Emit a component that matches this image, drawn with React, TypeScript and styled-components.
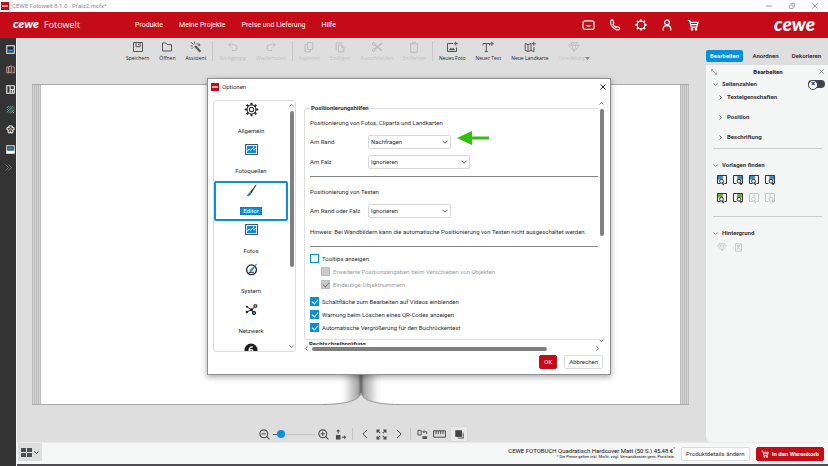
import React from 'react';
import styled, { createGlobalStyle, css } from 'styled-components';

const RED = '#c50b17';
const BLUE = '#0a8fdc';

const GlobalStyle = createGlobalStyle`
  * { box-sizing: border-box; }
  html, body, #root { height: 100%; margin: 0; }
  body {
    font-family: Roboto, 'Open Sans', 'Noto Sans', sans-serif;
    font-size: 6px;
    line-height: 8px;
    color: #2b2b2b;
    background: #fff;
    overflow: hidden;
  }
  button, input, select { font: inherit; color: inherit; margin: 0; padding: 0; }
  button { background: none; border: 0; cursor: pointer; white-space: nowrap; }
  svg { display: block; flex: none; }
  a { color: inherit; text-decoration: none; }
`;

/* ---------- icons ---------- */

type IconProps = { size?: number; width?: number; stroke?: number; children: React.ReactNode; box?: string };

const Icon = ({ size = 12, width, stroke = 1, box, children }: IconProps) => (
  <svg
    width={width ?? size}
    height={size}
    viewBox={box ?? '0 0 12 12'}
    fill="none"
    stroke="currentColor"
    strokeWidth={stroke}
    aria-hidden="true"
  >
    {children}
  </svg>
);

const Chevron = ({ dir, size = 6, stroke = 1 }: { dir: 'up' | 'down' | 'left' | 'right'; size?: number; stroke?: number }) => {
  const d = {
    up: 'M1 8.5 6 3.5l5 5',
    down: 'M1 3.5l5 5 5-5',
    left: 'M8.5 1l-5 5 5 5',
    right: 'M3.5 1l5 5-5 5',
  }[dir];
  return (
    <Icon size={size} stroke={(stroke * 12) / size}>
      <path d={d} />
    </Icon>
  );
};

const CloseIcon = ({ size = 6, stroke = 1 }: { size?: number; stroke?: number }) => (
  <Icon size={size} stroke={(stroke * 12) / size}>
    <path d="M1 1l10 10M11 1L1 11" />
  </Icon>
);

const SaveIcon = () => (
  <Icon>
    <path d="M1.5 1.5h9v9h-9zM4 1.5v4.2h4.2V1.5M6.6 2.6v1.6" />
  </Icon>
);
const FolderIcon = () => (
  <Icon>
    <path d="M1.5 2h3.3l1.4 1.6h4.3v6.4h-9z" />
  </Icon>
);
const WandIcon = () => (
  <Icon>
    <path d="M5 5l5.5 5.8" strokeWidth="2.2" />
    <path d="M3.4 3.6L1 1.2M4.6 2.6V.6M2.6 5H.6M6.3 3.4l1.4-1.5M3 6.4L1.8 7.8M9 2.6v2.6M7.7 3.9h2.6" />
  </Icon>
);
const UndoIcon = () => (
  <Icon>
    <path d="M4.2 1.2L1.6 3.8l2.6 2.6M1.8 3.8h5.4a2.9 2.9 0 010 5.8H5" />
  </Icon>
);
const RedoIcon = () => (
  <Icon>
    <path d="M7.8 1.2l2.6 2.6-2.6 2.6M10.2 3.8H4.8a2.9 2.9 0 000 5.8H7" />
  </Icon>
);
const CopyIcon = () => (
  <Icon>
    <path d="M4.3 1.5h5.5v7H4.3zM4.3 3.5H2v7.2h5.4V8.5" />
  </Icon>
);
const PasteIcon = () => (
  <Icon>
    <path d="M2.2 9V1.8h5.4v1M4.3 3.8h3.2l2.3 2.3v4.8H4.3zM7.3 3.8v2.4h2.4" />
  </Icon>
);
const ScissorsIcon = () => (
  <Icon>
    <circle cx="2.8" cy="3" r="1.4" />
    <circle cx="2.8" cy="9" r="1.4" />
    <path d="M4 4l6.8 5.6M4 8l6.8-5.6" strokeWidth="1.4" />
  </Icon>
);
const TrashIcon = () => (
  <Icon>
    <path d="M1.8 2.8h8.4M4.4 2.6V1.2h3.2v1.4M2.8 2.8v8.4h6.4V2.8" />
  </Icon>
);
const NewPhotoIcon = () => (
  <Icon>
    <path d="M7 2.500H1.500v8h9V6.500M9.800.6v4M7.800 2.600h4" />
    <path d="M3 9l1.700-2 1.400 1 1.200-1L9 9z" fill="currentColor" strokeWidth=".4" />
  </Icon>
);
const NewTextIcon = () => (
  <Icon>
    <path d="M1 4.4V2.5h6.6v1.9M4.3 2.5v8M2.8 10.6h3M9.8.8v4M7.8 2.8h4" />
  </Icon>
);
const NewMapIcon = () => (
  <Icon>
    <path d="M1.2 2.5l2.8 1v7l-2.8-1zM4 3.5l3-1v7l-3 1M7 9.5l3 1V6M9.8.8v4M7.8 2.8h4" />
  </Icon>
);
const DiamondIcon = ({ size = 12 }: { size?: number }) => (
  <Icon size={size}>
    <path d="M3 1.5h6l2.3 3L6 10.6.7 4.5zM.7 4.5h10.6M4 4.5l2 6 2-6M3 1.5l1 3 2-3 2 3 1-3" strokeWidth=".8" />
  </Icon>
);
const MessageIcon = () => (
  <Icon size={13} box="0 0 13 13" stroke={1.2}>
    <rect x="1" y="1.8" width="11" height="8.6" rx="2" />
    <path d="M4 6.2q2.5 2 5 0" />
  </Icon>
);
const PhoneIcon = () => (
  <Icon size={12} stroke={1.2}>
    <path d="M3 .9c-1 .4-1.6 1.2-1.4 2.6.5 3.4 3 6.3 6 7.3 1.400.4 2.500 0 3-.9.3-.6-.1-1-.6-1.400l-1.300-.8c-.6-.3-1 .3-1.500.6C5.700 7.900 4.500 6.700 4 5.300c.4-.4 1-.8.7-1.500L4.100 1.700C3.900 1.100 3.500.8 3 .9z" />
  </Icon>
);
const HeaderGearIcon = () => (
  <Icon size={12} stroke={1.2}>
    <circle cx="6" cy="6" r="3.9" />
    <path d="M6 .4v1.700M6 9.900v1.700M.4 6h1.700M9.900 6h1.700M2 2l1.200 1.200M8.800 8.800L10 10M2 10l1.200-1.200M8.800 3.200L10 2" strokeWidth="1.800" />
  </Icon>
);
const UserIcon = () => (
  <Icon size={12} stroke={1.2}>
    <circle cx="6" cy="3.500" r="2.400" />
    <path d="M2.200 11.400V9.900c0-2 1.400-3.200 3.800-3.200s3.800 1.200 3.800 3.200v1.500" />
  </Icon>
);
const CartIcon = ({ size = 12 }: { size?: number }) => (
  <Icon size={size} stroke={1.2}>
    <path d="M.8 1.500h1.900l1.600 6.700h5.400l1.400-4.800H3.200M4 5.700h6.300" />
    <circle cx="5" cy="10.300" r=".8" fill="currentColor" />
    <circle cx="9" cy="10.300" r=".8" fill="currentColor" />
  </Icon>
);

const SidePhotoIcon = () => (
  <Icon size={9} stroke={1.4}>
    <rect x="1" y="1" width="10" height="10" />
    <rect x="3" y="3.400" width="6" height="5" fill="#152a3c" stroke="none" />
    <rect x="3" y="6.200" width="6" height="2.200" fill="#2a9be6" stroke="none" />
  </Icon>
);
const SideMapIcon = () => (
  <Icon size={9} stroke={1.3}>
    <g stroke="#c59a94">
      <path d="M1 2.500h2.500v8H1zM3.500 2.500L7 1v8.500l-3.500 1zM8.500 2.500H11v8H7" />
    </g>
  </Icon>
);
const SideLayoutIcon = () => (
  <Icon size={9} stroke={1.5}>
    <path d="M1 1h10v10H1zM5.500 1v10M5.500 6H11M8.500 6v5" />
  </Icon>
);
const SidePatternIcon = () => (
  <Icon size={9} stroke={1.3}>
    <path d="M1 4l3-3M1 10L10 1" stroke="#8fae5d" />
    <path d="M1 7l6-6M3 11l8-8" stroke="#3d8fd0" />
    <path d="M6 11l5-5M9 11l2-2" stroke="#b9a086" />
  </Icon>
);
const SideFlowerIcon = () => (
  <Icon size={9} stroke={1.5}>
    <path d="M6 1.200c1.500-.6 2.600.8 2.200 2 1.400-.2 3 .7 2.500 2.300-.3 1-1.200 1.400-2 1.500.8.9.9 2.600-.4 3.300-1 .5-1.900 0-2.300-.8-.4.8-1.300 1.300-2.300.8C2.400 9.600 2.500 7.900 3.300 7c-.8-.1-1.700-.5-2-1.500-.5-1.600 1.100-2.500 2.500-2.300C3.400 2 4.500.6 6 1.200z" />
    <circle cx="6" cy="5.800" r="1.200" stroke="#c99b78" />
  </Icon>
);
const SideCardIcon = () => (
  <Icon size={9} stroke={1.3}>
    <rect x="1" y="1" width="10" height="10" />
    <rect x="3" y="3.400" width="6" height="2.600" fill="#2a9be6" stroke="none" />
    <rect x="1" y="7.500" width="10" height="3.500" fill="#fff" stroke="none" />
  </Icon>
);

const GearIcon = () => (
  <Icon size={15} box="0 0 16 16" stroke={1.1}>
    <circle cx="8" cy="8" r="2.300" />
    <path
      d="M8 .8v2.500M8 12.700v2.500M.8 8h2.500M12.700 8h2.500M2.900 2.900l1.800 1.800M11.300 11.300l1.800 1.800M2.900 13.100l1.800-1.800M11.300 4.700l1.800-1.800"
      strokeWidth="2.200"
    />
    <circle cx="8" cy="8" r="4.700" />
  </Icon>
);
const PictureIcon = () => (
  <Icon size={11} width={13} box="0 0 13 11">
    <rect x=".5" y=".5" width="12" height="10" fill="#dcecf7" stroke="#4a5560" />
    <rect x="2" y="2" width="9" height="7" fill={BLUE} stroke="none" />
    <path d="M2 7.500l2-2.500 1.500 1.200L7.500 4.500l1.300 1 2-1" stroke="#e6f4fd" />
    <circle cx="8.600" cy="3.200" r=".6" fill="#fff" stroke="none" />
  </Icon>
);
const BrushIcon = () => (
  <Icon size={13} box="0 0 13 13">
    <path d="M11.200.8L5.200 8.300l1 .8z" fill="#222" strokeWidth=".6" />
    <path d="M5 8.600c-1.400.4-1.400 2-3 3.200 2 .3 3.700-.6 4-2.300z" fill={BLUE} stroke="#1c5f90" strokeWidth=".4" />
  </Icon>
);
const GaugeIcon = () => (
  <Icon size={13} box="0 0 13 13">
    <circle cx="6.500" cy="6.800" r="4.900" stroke="#222" strokeWidth="1.300" />
    <path d="M11.500 1.200L5.600 6.800 5 8.400l1.600-.4z" fill={BLUE} stroke={BLUE} />
    <path d="M3.800 9.300h5" stroke="#222" />
  </Icon>
);
const NetworkIcon = () => (
  <Icon size={13} box="0 0 13 13">
    <path d="M2 3.800l4.500 3L10.500 3M1.800 9l4.700-2.200L9 10" stroke="#222" />
    <circle cx="10.400" cy="3" r="1.600" fill="#c9a482" stroke="#222" />
    <circle cx="9" cy="10" r="1.700" fill={BLUE} stroke="#222" />
    <circle cx="1.900" cy="3.700" r="1" fill="#222" stroke="none" />
    <circle cx="6.400" cy="6.800" r="1.500" fill="#222" stroke="none" />
    <circle cx="1.900" cy="9" r="1.300" fill="#222" stroke="none" />
  </Icon>
);
const BadgeIcon = () => (
  <Icon size={14} box="0 0 14 14">
    <circle cx="7" cy="7" r="6.500" fill="#1d1d1d" stroke="none" />
    <path d="M8.800 4C6 3.500 5 5.500 5.200 8c.3 2 3.600 2 3.600 0S6 6.500 5.300 7.600" stroke="#fff" strokeWidth="1.300" />
  </Icon>
);

const TemplateIcon = ({ tint, side }: { tint?: string; side: 'left' | 'right' }) => (
  <Icon size={12} stroke={1}>
    <path d="M1.500 1.500h9v8H8.500M4.500 9.500h-3v-8M6 1.500V6" />
    {tint && <rect x={side === 'left' ? 2 : 6.5} y="2" width="3.500" height="3.500" fill={tint} stroke="none" />}
    <circle cx={side === 'left' ? 5.5 : 7} cy="7.200" r="1.900" fill="#f4f5f5" />
    <path d={side === 'left' ? 'M6.600 8.800l1 2.400' : 'M8 8.800l1.400 2.200'} strokeWidth="1.300" />
  </Icon>
);
const PersonCardIcon = () => (
  <Icon size={9} stroke={1.2}>
    <path d="M2 1h8v10H2zM3.500 2.500l5 6.500M8.500 2.500L3.500 9" />
    <circle cx="6" cy="4" r="1.200" />
  </Icon>
);

const ZoomIcon = ({ plus }: { plus?: boolean }) => (
  <Icon size={11} stroke={1.2}>
    <circle cx="5.200" cy="5.200" r="4.300" />
    <path d={plus ? 'M8.400 8.400l3 3M3 5.200h4.400M5.200 3v4.400' : 'M8.400 8.400l3 3M3 5.200h4.400'} />
  </Icon>
);
const OriginIcon = () => (
  <Icon size={11}>
    <rect x="1" y="6.500" width="5" height="5" fill="currentColor" stroke="none" />
    <path d="M3.500 5V1M2 2.600L3.500 1 5 2.600M7.500 9h4M10 7.400L11.500 9 10 10.600" strokeWidth="1.100" />
  </Icon>
);
const ExpandIcon = () => (
  <Icon size={11} stroke={1.3}>
    <path d="M1.200 4V1.200H4M8 1.200h2.800V4M10.800 8v2.800H8M4 10.800H1.200V8M1.500 1.500l3 3M10.500 1.500l-3 3M10.500 10.500l-3-3M1.500 10.500l3-3" />
  </Icon>
);
const SwapIcon = () => (
  <Icon size={11}>
    <path d="M1 1.500h3.500v5H1zM6.500 3h4v2.500M8 1.500L6.500 3 8 4.500" />
    <rect x="6" y="8" width="5" height="2.800" fill="currentColor" stroke="none" />
  </Icon>
);
const RulerIcon = () => (
  <Icon size={8} width={13} box="0 0 13 8">
    <path d="M.6.8h11.800v6.400H.6zM3 1v3.200M5.300 1v3.200M7.700 1v3.200M10 1v3.200" />
  </Icon>
);
const LayersIcon = () => (
  <Icon size={10}>
    <path d="M4.500 11h6.500V4.500" stroke="#777" strokeWidth="1.600" />
    <rect x="1.500" y="1.500" width="8" height="8" fill="#444" stroke="none" />
  </Icon>
);
const GridIcon = () => (
  <Icon size={9} width={11} box="0 0 11 9">
    <path d="M0 0h5v4H0zM6 0h5v4H6zM0 5h5v4H0zM6 5h5v4H6z" fill="#4b4f52" stroke="none" />
  </Icon>
);
const CollapseIcon = () => (
  <Icon size={6} stroke={1.6}>
    <path d="M1 5V1h4M1 1l10 10M7 11h4V7" />
  </Icon>
);

/* ---------- window frame ---------- */

const Window = styled.div`
  position: relative;
  height: 100vh;
  display: flex;
  flex-direction: column;
`;

const TitleBar = styled.div`
  flex: none;
  height: 12px;
  display: flex;
  align-items: center;
  gap: 3px;
  padding: 0 10px 0 1px;
  color: #8b8b8b;
`;

const AppBadge = styled.span`
  width: 8px;
  height: 8px;
  background: ${RED};
  display: flex;
  align-items: center;
  justify-content: center;
  &::after {
    content: '';
    width: 6px;
    height: 2px;
    background: #eba6a9;
  }
`;

const WindowControls = styled.div`
  margin-left: auto;
  display: flex;
  gap: 17px;
  color: #9a9a9a;
`;

const Header = styled.header`
  flex: none;
  height: 26px;
  background: ${RED};
  color: #fff;
  display: flex;
  align-items: center;
  padding: 0 13px;
  font-size: 7px;
`;

const Logo = styled.span<{ $large?: boolean }>`
  font-family: Lato, 'Open Sans', sans-serif;
  font-weight: 900;
  font-style: italic;
  font-size: ${(p) => (p.$large ? 19 : 12)}px;
  line-height: 20px;
  padding-bottom: ${(p) => (p.$large ? 3 : 2)}px;
`;

const Brand = styled.div`
  display: flex;
  align-items: center;
  gap: 5px;
  width: 122px;
  font-family: 'Open Sans', 'Noto Sans', sans-serif;
  font-size: 9px;
`;

const Nav = styled.nav`
  display: flex;
  gap: 16px;
`;

const HeaderTools = styled.div`
  margin-left: auto;
  display: flex;
  align-items: center;
  gap: 14px;
  margin-right: 75px;
`;

const HeaderButton = styled.button`
  width: 12px;
  height: 14px;
  display: flex;
  align-items: center;
  justify-content: center;
  color: #fff;
`;

const Body = styled.div`
  flex: 1;
  min-height: 0;
  display: grid;
  grid-template-columns: 17px minmax(0, 1fr);
`;

const SideBar = styled.aside`
  background: #333;
  border-right: 1px solid #f2f2f2;
  display: flex;
  flex-direction: column;
  align-items: center;
  padding: 6px 0 0 4px;
  gap: 10px;
  color: #eee;
`;

const SideButton = styled.button`
  display: flex;
  align-items: center;
  justify-content: center;
  height: 10px;
  &:last-child { color: #777; height: 6px; margin-right: 3px; }
`;

const Main = styled.div`
  display: flex;
  flex-direction: column;
  min-height: 0;
  background: #dedede;
`;

const Content = styled.div`
  flex: 1;
  min-height: 0;
  display: grid;
  grid-template-columns: minmax(0, 1fr) 122px;
`;

const Workspace = styled.main`
  display: flex;
  flex-direction: column;
  min-height: 0;
`;

/* ---------- tool bar ---------- */

const ToolBar = styled.div`
  display: flex;
  height: 46px;
  padding: 3px 0 0 103px;
  font-family: 'Open Sans', 'Noto Sans', sans-serif;
`;

const ToolGroup = styled.div`
  display: flex;
  align-items: flex-start;
  gap: 10px;
  height: 20px;
  padding: 0 6px;
  & + & { border-left: 1px solid #c6c6c6; }
`;

const ToolButton = styled.button`
  display: flex;
  flex-direction: column;
  align-items: center;
  gap: 2px;
  font-size: 5px;
  color: #222;
  svg { color: #555; }
  &:disabled { color: #c3c3c3; }
  &:disabled svg { color: #bcbcbc; }
`;

const ToolLabel = styled.span`
  display: flex;
  align-items: center;
  line-height: 7px;
`;

/* ---------- book ---------- */

const Book = styled.section`
  position: relative;
  flex: 1;
  min-height: 0;
  margin: 0 17px 0 15px;
  display: grid;
  grid-template-columns: 9px minmax(0, 1fr) minmax(0, 1fr) 9px;
  border-top: 1px solid #aaa;
  border-bottom: 1px solid #aaa;
`;

const PageStack = styled.div`
  background: repeating-linear-gradient(90deg, #bdbdbd 0 1px, #d2d2d2 1px 2px);
`;

const Page = styled.div<{ $side: 'left' | 'right' }>`
  background: linear-gradient(
    ${(p) => (p.$side === 'left' ? '270deg' : '90deg')},
    #666 0,
    #a8a8a8 3px,
    #cfcfcf 10px,
    #f4f4f4 16px,
    #fff 21px
  );
`;

const PageCurve = styled.svg`
  position: absolute;
  left: calc(50% - 38px);
  bottom: -1px;
`;

const ViewBar = styled.div`
  flex: none;
  height: 37px;
  display: flex;
  align-items: flex-end;
  justify-content: center;
  gap: 6px;
  padding: 0 0 1px 3px;
  color: #4c4c4c;
`;

const ViewButton = styled.button<{ $on?: boolean }>`
  width: ${(p) => (p.$on ? 16 : 11)}px;
  height: 14px;
  display: flex;
  align-items: center;
  justify-content: center;
  ${(p) => p.$on && css`background: #e9e9e9; box-shadow: 0 0 1px #bbb;`}
`;

const ViewDivider = styled.span`
  width: 1px;
  height: 12px;
  margin-bottom: 1px;
  background: #c4c4c4;
`;

const ZoomSlider = styled.input`
  appearance: none;
  width: 42px;
  height: 14px;
  && { margin: 0 -3px; }
  background: linear-gradient(90deg, #555 0 6px, #c2c2c2 6px) center / 100% 1px no-repeat;
  &::-webkit-slider-thumb {
    appearance: none;
    width: 8px;
    height: 8px;
    border-radius: 50%;
    background: ${BLUE};
  }
`;

/* ---------- right panel ---------- */

const Inspector = styled.aside`
  display: flex;
  flex-direction: column;
  padding-top: 12px;
  font-weight: 600;
`;

const Tabs = styled.div`
  display: flex;
  justify-content: space-between;
  padding: 0 3px 0 0;
`;

const Tab = styled.button<{ $active?: boolean }>`
  height: 12px;
  min-width: 37px;
  border-radius: 2px;
  ${(p) => p.$active && css`background: ${BLUE}; color: #fff;`}
`;

const Panel = styled.div`
  flex: 1;
  margin-top: 3px;
  padding: 0 3px 0 7px;
  background: #f4f5f5;
  border-bottom-left-radius: 5px;
`;

const PanelTitle = styled.div`
  display: flex;
  align-items: center;
  justify-content: space-between;
  height: 13px;
  padding-right: 1px;
  margin-left: -2px;
  font-weight: 700;
  color: #222;
  svg { color: #999; }
`;

const SectionButton = styled.button<{ $nested?: boolean }>`
  display: flex;
  align-items: center;
  gap: 4px;
  height: ${(p) => (p.$nested ? 20 : 12)}px;
  padding-left: ${(p) => (p.$nested ? 5 : 0)}px;
  font-weight: 700;
  color: #333;
  svg { color: #777; }
`;

const SectionRow = styled.div`
  display: flex;
  align-items: center;
  justify-content: space-between;
`;

const Nested = styled.div`
  display: flex;
  flex-direction: column;
  align-items: flex-start;
  margin-top: -3px;
`;

const PanelRule = styled.hr`
  height: 1px;
  margin: 1px 3px 10px 0;
  border: 0;
  background: #ccc;
`;

const TemplateGrid = styled.div`
  display: grid;
  grid-template-columns: repeat(4, 12px);
  gap: 6px 4px;
  padding: 3px 0 11px 3px;
  color: #333;
`;

const TemplateButton = styled.button`
  display: flex;
  align-items: center;
  justify-content: center;
  &:disabled { color: #c8c8c8; }
`;

const Toggle = styled.input`
  appearance: none;
  position: relative;
  width: 17px;
  height: 8px;
  border-radius: 4px;
  background: #414549;
  &::after {
    content: '×';
    position: absolute;
    left: 0;
    top: 0;
    width: 8px;
    height: 8px;
    border-radius: 50%;
    border: 1px solid #414549;
    background: #fff;
    color: #222;
    font-size: 8px;
    line-height: 6px;
    text-align: center;
  }
`;

/* ---------- footer ---------- */

const Footer = styled.footer`
  flex: none;
  display: flex;
  align-items: center;
  justify-content: flex-end;
  gap: 6px;
  height: 24px;
  padding: 0 4px 0 1px;
  background: #f5f6f6;
  border-bottom: 2px solid #4d4d4f;
  border-top: 1px solid #e9e9e9;
`;

const ThumbButton = styled.button`
  align-self: flex-start;
  margin-right: auto;
  display: flex;
  align-items: center;
  gap: 2px;
  height: 18px;
  width: 24px;
  padding-left: 3px;
  background: #dedede;
`;

const Price = styled.p`
  margin: 0;
  text-align: right;
  line-height: 7px;
  color: #111;
  sup { font-size: 4px; line-height: 0; }
  small { display: block; font-size: 4px; line-height: 6px; }
`;

const Button = styled.button<{ $primary?: boolean; $bold?: boolean }>`
  display: flex;
  align-items: center;
  justify-content: center;
  gap: 3px;
  height: 14px;
  padding: 0 4px;
  border-radius: 2px;
  border: 1px solid ${(p) => (p.$primary ? RED : '#dcdcdc')};
  background: ${(p) => (p.$primary ? RED : '#fff')};
  color: ${(p) => (p.$primary ? '#fff' : '#2b2b2b')};
  font-weight: ${(p) => (p.$bold ? 700 : 400)};
`;

/* ---------- options dialog ---------- */

const Dialog = styled.section`
  position: absolute;
  left: 25%;
  top: 78px;
  width: 404px;
  display: flex;
  flex-direction: column;
  background: #fff;
  border: 1px solid #8f8f8f;
  box-shadow: 0 2px 6px rgba(0, 0, 0, 0.35);
`;

const DialogTitle = styled.div`
  display: flex;
  align-items: center;
  gap: 3px;
  height: 15px;
  padding: 0 4px 0 3px;
  h1 { margin: 0; font-size: 6px; font-weight: 400; }
`;

const IconButton = styled.button`
  display: flex;
  align-items: center;
  justify-content: center;
  &:last-child { margin-left: auto; }
`;

const DialogBody = styled.div`
  display: grid;
  grid-template-columns: 83px minmax(0, 1fr);
  gap: 8px;
  height: 253px;
  margin-top: 5px;
  padding: 0 5px;
`;

const CategoryFrame = styled.div`
  display: grid;
  grid-template-columns: minmax(0, 1fr) 7px;
  min-height: 0;
  margin-top: 1px;
  border: 1px solid #dcdcdc;
  border-radius: 3px;
  overflow: hidden;
`;

const CategoryList = styled.nav`
  display: flex;
  flex-direction: column;
  min-height: 0;
  overflow: hidden;
`;

const Category = styled.button<{ $active?: boolean }>`
  flex: none;
  height: 40px;
  display: flex;
  flex-direction: column;
  align-items: center;
  justify-content: space-between;
  padding: ${(p) => (p.$active ? '0 0 4px' : '1px 0 6px')};
  border: ${(p) => (p.$active ? `2px solid ${BLUE}` : '0')};
  border-radius: 2px;
`;

const CategoryIcon = styled.span`
  height: 15px;
  display: flex;
  align-items: center;
`;

const CategoryLabel = styled.span<{ $active?: boolean }>`
  padding: 0 3px;
  ${(p) => p.$active && css`background: ${BLUE}; color: #fff; outline: 1px dotted #1b6ea5; outline-offset: -1px;`}
`;

const VScroll = styled.div`
  display: flex;
  flex-direction: column;
  align-items: center;
  justify-content: space-between;
  gap: 3px;
  padding: 2px 0;
  color: #777;
`;

const Track = styled.div<{ $horizontal?: boolean }>`
  flex: 1;
  display: flex;
  flex-direction: ${(p) => (p.$horizontal ? 'row' : 'column')};
`;

const Thumb = styled.div<{ $percent: number }>`
  flex: 0 0 ${(p) => p.$percent}%;
  min-width: 4px;
  min-height: 4px;
  border-radius: 2px;
  background: #7f7f7f;
`;

const Settings = styled.div`
  display: grid;
  min-height: 0;
  grid-template-columns: minmax(0, 1fr) 7px;
  grid-template-rows: minmax(0, 1fr) 7px;
`;

const SettingsView = styled.div`
  overflow: hidden;
  padding-top: 5px;
`;

const Group = styled.fieldset`
  min-width: 0;
  margin: 0;
  padding: 7px 0 3px 5px;
  border: 1px solid #dedede;
  border-right: 0;
  border-radius: 3px 0 0 3px;
  legend { padding: 0 1px; font-weight: 700; line-height: 8px; }
`;

const Caption = styled.p<{ $hint?: boolean }>`
  margin: ${(p) => (p.$hint ? '10px 0' : '0 0 8px')};
  height: 8px;
  white-space: nowrap;
`;

const Field = styled.div`
  display: flex;
  align-items: center;
  height: 14px;
  margin-bottom: 6px;
  label { width: 58px; }
`;

const SelectBox = styled.span<{ $wide?: boolean }>`
  display: grid;
  grid-template-columns: minmax(0, 1fr) 12px;
  align-items: center;
  width: ${(p) => (p.$wide ? 102 : 83)}px;
  margin-right: 6px;
  select, svg { grid-row: 1; }
  select {
    grid-column: 1 / 3;
    appearance: none;
    width: 100%;
    height: 14px;
    padding-left: 2px;
    border: 1px solid #d8d8d8;
    border-radius: 2px;
    background: #fff;
  }
  svg { grid-column: 2; z-index: 1; pointer-events: none; justify-self: center; color: #555; }
`;

const PointerArrow = styled.svg`
  align-self: flex-end;
  margin-bottom: 4px;
`;

const Rule = styled.hr<{ $tight?: boolean }>`
  height: 1px;
  margin: 7px 0 ${(p) => (p.$tight ? 7 : 11)}px;
  border: 0;
  background: #858585;
`;

const CheckLabel = styled.label<{ $nested?: boolean; $off?: boolean; $spaced?: boolean }>`
  display: flex;
  align-items: center;
  gap: 3px;
  height: 9px;
  margin-bottom: ${(p) => (p.$spaced ? 8 : 4)}px;
  padding-left: ${(p) => (p.$nested ? 11 : 0)}px;
  white-space: nowrap;
  color: ${(p) => (p.$off ? '#9c9c9c' : 'inherit')};
`;

const CheckBox = styled.input`
  appearance: none;
  flex: none;
  display: flex;
  justify-content: center;
  width: 9px;
  height: 9px;
  border: 1px solid ${BLUE};
  background: #fff;
  &:checked { background: ${BLUE}; }
  &:disabled { background: #c9c9c9; border-color: #bdbdbd; }
  &:checked::after {
    content: '';
    width: 3px;
    height: 5px;
    border: solid #fff;
    border-width: 0 1px 1px 0;
    transform: rotate(42deg);
  }
  &:checked:disabled::after { border-color: #777; }
`;

const ClippedHeading = styled.p`
  margin: 0 0 0 5px;
  font-weight: 700;
  height: 8px;
`;

const HScroll = styled.div`
  grid-column: 1 / 3;
  display: flex;
  align-items: center;
  gap: 3px;
  padding-right: 5px;
  color: #666;
`;

const DialogActions = styled.div`
  display: flex;
  justify-content: flex-end;
  gap: 7px;
  padding: 3px 7px 5px;
`;

/* ---------- data ---------- */

const toolGroups = [
  [
    { label: 'Speichern', icon: <SaveIcon /> },
    { label: 'Öffnen', icon: <FolderIcon /> },
    { label: 'Assistent', icon: <WandIcon /> },
  ],
  [
    { label: 'Rückgängig', icon: <UndoIcon />, off: true },
    { label: 'Wiederholen', icon: <RedoIcon />, off: true },
  ],
  [
    { label: 'Kopieren', icon: <CopyIcon />, off: true },
    { label: 'Einfügen', icon: <PasteIcon />, off: true },
    { label: 'Ausschneiden', icon: <ScissorsIcon />, off: true },
    { label: 'Entfernen', icon: <TrashIcon />, off: true },
  ],
  [
    { label: 'Neues Foto', icon: <NewPhotoIcon /> },
    { label: 'Neuer Text', icon: <NewTextIcon /> },
    { label: 'Neue Landkarte', icon: <NewMapIcon /> },
    { label: 'Veredelung', icon: <DiamondIcon />, off: true, menu: true },
  ],
] as { label: string; icon: React.ReactNode; off?: boolean; menu?: boolean }[][];

const categories = [
  { label: 'Allgemein', icon: <GearIcon /> },
  { label: 'Fotoquellen', icon: <PictureIcon /> },
  { label: 'Editor', icon: <BrushIcon />, active: true },
  { label: 'Fotos', icon: <PictureIcon /> },
  { label: 'System', icon: <GaugeIcon /> },
  { label: 'Netzwerk', icon: <NetworkIcon /> },
  { label: '', icon: <BadgeIcon /> },
];

const checks = [
  { label: 'Tooltips anzeigen' },
  { label: 'Erweiterte Positionsangaben beim Verschieben von Objekten', nested: true, off: true },
  { label: 'Eindeutige Objektnummern', nested: true, off: true, on: true, spaced: true },
  { label: 'Schaltfläche zum Bearbeiten auf Videos einblenden', on: true },
  { label: 'Warnung beim Löschen eines QR-Codes anzeigen', on: true },
  { label: 'Automatische Vergrößerung für den Buchrückentext', on: true },
];

const SelectField = ({ id, label, value, wide, children }: {
  id: string; label: string; value: string; wide?: boolean; children?: React.ReactNode;
}) => (
  <Field>
    <label htmlFor={id}>{label}</label>
    <SelectBox $wide={wide}>
      <select id={id} defaultValue={value}>
        <option>Nachfragen</option>
        <option>Ignorieren</option>
      </select>
      <Chevron dir="down" size={6} />
    </SelectBox>
    {children}
  </Field>
);

const VerticalScroll = ({ percent }: { percent: number }) => (
  <VScroll>
    <Chevron dir="up" size={5} />
    <Track>
      <Thumb $percent={percent} />
    </Track>
    <Chevron dir="down" size={5} />
  </VScroll>
);

const OptionsDialog = () => (
  <Dialog role="dialog" aria-label="Optionen">
    <DialogTitle>
      <AppBadge />
      <h1>Optionen</h1>
      <IconButton aria-label="Schließen">
        <CloseIcon />
      </IconButton>
    </DialogTitle>
    <DialogBody>
      <CategoryFrame>
        <CategoryList>
          {categories.map((c) => (
            <Category key={c.label} $active={c.active}>
              <CategoryIcon>{c.icon}</CategoryIcon>
              <CategoryLabel $active={c.active}>{c.label}</CategoryLabel>
            </Category>
          ))}
        </CategoryList>
        <VerticalScroll percent={68} />
      </CategoryFrame>
      <Settings>
        <SettingsView>
          <Group>
            <legend>Positionierungshilfen</legend>
            <Caption>Positionierung von Fotos, Cliparts und Landkarten</Caption>
            <SelectField id="edge" label="Am Rand" value="Nachfragen">
              <PointerArrow width="32" height="14" viewBox="0 0 32 14" aria-hidden="true">
                <path d="M0 7L15 0v5.500h17v3H15V14z" fill="#2fc20a" />
              </PointerArrow>
            </SelectField>
            <SelectField id="fold" label="Am Falz" value="Ignorieren" wide />
            <Rule />
            <Caption>Positionierung von Texten</Caption>
            <SelectField id="text-edge" label="Am Rand oder Falz" value="Ignorieren" />
            <Caption $hint>
              Hinweis: Bei Wandbildern kann die automatische Positionierung von Texten nicht ausgeschaltet werden.
            </Caption>
            <Rule $tight />
            {checks.map((c) => (
              <CheckLabel key={c.label} $nested={c.nested} $off={c.off} $spaced={c.spaced}>
                <CheckBox type="checkbox" defaultChecked={c.on} disabled={c.off} />
                {c.label}
              </CheckLabel>
            ))}
          </Group>
          <ClippedHeading>Rechtschreibprüfung</ClippedHeading>
        </SettingsView>
        <VerticalScroll percent={56} />
        <HScroll>
          <Chevron dir="left" size={5} />
          <Track $horizontal>
            <Thumb $percent={84} />
          </Track>
          <Chevron dir="right" size={5} />
        </HScroll>
      </Settings>
    </DialogBody>
    <DialogActions>
      <Button $primary>OK</Button>
      <Button>Abbrechen</Button>
    </DialogActions>
  </Dialog>
);

const blue = '#2b8fd6';
const green = '#63b92e';

export default function App() {
  return (
    <Window>
      <GlobalStyle />
      <TitleBar>
        <AppBadge />
        <span>CEWE Fotowelt 8.1.0 - Pfalz2.mcfx*</span>
        <WindowControls>
          <IconButton aria-label="Minimieren">
            <Icon size={6} stroke={2}><path d="M0 6h12" /></Icon>
          </IconButton>
          <IconButton aria-label="Verkleinern">
            <Icon size={6} stroke={1.6}><path d="M1 4h7v7H1zM4 3V1h7v7H9" /></Icon>
          </IconButton>
          <IconButton aria-label="Schließen"><CloseIcon /></IconButton>
        </WindowControls>
      </TitleBar>
      <Header>
        <Brand>
          <Logo>cewe</Logo>
          <span>Fotowelt</span>
        </Brand>
        <Nav>
          <a href="#produkte">Produkte</a>
          <a href="#projekte">Meine Projekte</a>
          <a href="#preise">Preise und Lieferung</a>
          <a href="#hilfe">Hilfe</a>
        </Nav>
        <HeaderTools>
          <HeaderButton aria-label="Nachrichten"><MessageIcon /></HeaderButton>
          <HeaderButton aria-label="Telefon"><PhoneIcon /></HeaderButton>
          <HeaderButton aria-label="Einstellungen"><HeaderGearIcon /></HeaderButton>
          <HeaderButton aria-label="Konto"><UserIcon /></HeaderButton>
          <HeaderButton aria-label="Warenkorb"><CartIcon /></HeaderButton>
        </HeaderTools>
        <Logo $large>cewe</Logo>
      </Header>
      <Body>
        <SideBar>
          <SideButton aria-label="Fotos"><SidePhotoIcon /></SideButton>
          <SideButton aria-label="Karten"><SideMapIcon /></SideButton>
          <SideButton aria-label="Layouts"><SideLayoutIcon /></SideButton>
          <SideButton aria-label="Hintergründe"><SidePatternIcon /></SideButton>
          <SideButton aria-label="Cliparts"><SideFlowerIcon /></SideButton>
          <SideButton aria-label="Rahmen"><SideCardIcon /></SideButton>
          <SideButton aria-label="Ausklappen">
            <Icon size={7} stroke={1.6}><path d="M1 1l5 5-5 5M6 1l5 5-5 5" /></Icon>
          </SideButton>
        </SideBar>
        <Main>
          <Content>
            <Workspace>
              <ToolBar>
                {toolGroups.map((group, i) => (
                  <ToolGroup key={i}>
                    {group.map((t) => (
                      <ToolButton key={t.label} disabled={t.off}>
                        {t.icon}
                        <ToolLabel>
                          {t.label}
                          {t.menu && (
                            <svg width="5" height="3" viewBox="0 0 5 3"><path d="M0 0h5L2.500 3z" fill="#888" /></svg>
                          )}
                        </ToolLabel>
                      </ToolButton>
                    ))}
                  </ToolGroup>
                ))}
              </ToolBar>
              <Book>
                <PageStack />
                <Page $side="left" />
                <Page $side="right" />
                <PageStack />
                <PageCurve width="76" height="12" viewBox="0 0 76 12" aria-hidden="true">
                  <path d="M0 11.500C26 11 36 7 38 0c2 7 12 11 38 11.500V12H0z" fill="#dedede" />
                  <path d="M0 11.500C26 11 36 7 38 0c2 7 12 11 38 11.500" fill="none" stroke="#999" strokeWidth="1" />
                </PageCurve>
              </Book>
              <ViewBar>
                <ViewButton aria-label="Verkleinern"><ZoomIcon /></ViewButton>
                <ZoomSlider type="range" min="0" max="100" defaultValue="12" aria-label="Zoom" />
                <ViewButton aria-label="Vergrößern"><ZoomIcon plus /></ViewButton>
                <ViewButton aria-label="Ursprung"><OriginIcon /></ViewButton>
                <ViewDivider />
                <ViewButton aria-label="Zurück"><Chevron dir="left" size={10} stroke={1} /></ViewButton>
                <ViewButton aria-label="Vollbild"><ExpandIcon /></ViewButton>
                <ViewButton aria-label="Weiter"><Chevron dir="right" size={10} stroke={1} /></ViewButton>
                <ViewDivider />
                <ViewButton aria-label="Tauschen"><SwapIcon /></ViewButton>
                <ViewButton aria-label="Lineal"><RulerIcon /></ViewButton>
                <ViewButton $on aria-label="Ebenen"><LayersIcon /></ViewButton>
              </ViewBar>
            </Workspace>
            <Inspector>
              <Tabs>
                <Tab $active>Bearbeiten</Tab>
                <Tab>Anordnen</Tab>
                <Tab>Dekorieren</Tab>
              </Tabs>
              <Panel>
                <PanelTitle>
                  <CollapseIcon />
                  Bearbeiten
                  <CloseIcon size={5} />
                </PanelTitle>
                <SectionRow>
                  <SectionButton><Chevron dir="down" size={5} />Seitenzahlen</SectionButton>
                  <Toggle type="checkbox" role="switch" aria-label="Seitenzahlen" />
                </SectionRow>
                <Nested>
                  <SectionButton $nested><Chevron dir="right" size={5} />Texteigenschaften</SectionButton>
                  <SectionButton $nested><Chevron dir="right" size={5} />Position</SectionButton>
                  <SectionButton $nested><Chevron dir="right" size={5} />Beschriftung</SectionButton>
                </Nested>
                <PanelRule />
                <SectionButton><Chevron dir="down" size={5} />Vorlagen finden</SectionButton>
                <TemplateGrid>
                  <TemplateButton aria-label="Vorlage 1"><TemplateIcon side="left" tint={blue} /></TemplateButton>
                  <TemplateButton aria-label="Vorlage 2"><TemplateIcon side="right" tint={blue} /></TemplateButton>
                  <TemplateButton aria-label="Vorlage 3"><TemplateIcon side="left" tint={blue} /></TemplateButton>
                  <TemplateButton aria-label="Vorlage 4"><TemplateIcon side="right" tint={blue} /></TemplateButton>
                  <TemplateButton aria-label="Vorlage 5"><TemplateIcon side="left" tint={green} /></TemplateButton>
                  <TemplateButton aria-label="Vorlage 6"><TemplateIcon side="right" tint={green} /></TemplateButton>
                  <TemplateButton disabled aria-label="Vorlage 7"><TemplateIcon side="left" /></TemplateButton>
                  <TemplateButton disabled aria-label="Vorlage 8"><TemplateIcon side="right" /></TemplateButton>
                </TemplateGrid>
                <PanelRule />
                <SectionButton><Chevron dir="down" size={5} />Hintergrund</SectionButton>
                <TemplateGrid>
                  <TemplateButton disabled aria-label="Veredelung"><DiamondIcon size={10} /></TemplateButton>
                  <TemplateButton disabled aria-label="Hintergrund entfernen"><PersonCardIcon /></TemplateButton>
                </TemplateGrid>
              </Panel>
            </Inspector>
          </Content>
          <Footer>
            <ThumbButton aria-label="Seitenübersicht">
              <GridIcon />
              <Chevron dir="down" size={5} />
            </ThumbButton>
            <Price>
              CEWE FOTOBUCH Quadratisch Hardcover Matt (50 S.) 45,48 €<sup>*</sup>
              <small>* Die Preise gelten inkl. MwSt. zzgl. Versandkosten gem. Preisliste.</small>
            </Price>
            <Button>Produktdetails ändern</Button>
            <Button $primary $bold><CartIcon size={8} />In den Warenkorb</Button>
          </Footer>
        </Main>
      </Body>
      <OptionsDialog />
    </Window>
  );
}
